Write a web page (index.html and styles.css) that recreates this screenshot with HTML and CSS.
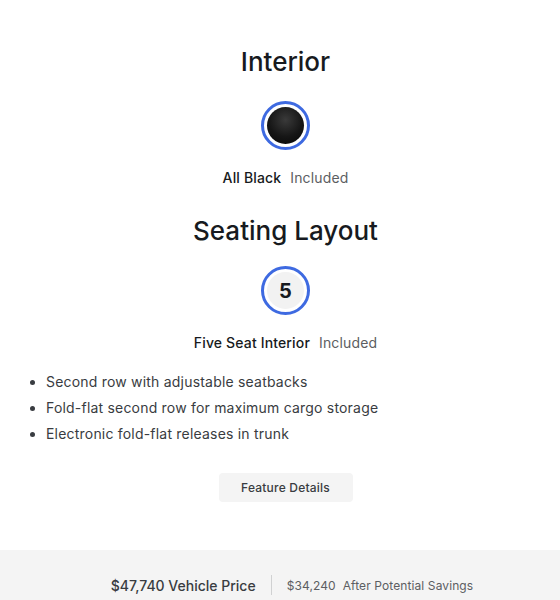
FILE: index.html
```html
<!DOCTYPE html>
<html lang="en">
<head>
<meta charset="utf-8">
<title>Interior</title>
<link rel="stylesheet" href="styles.css">
</head>
<body>
<main class="config">
  <section class="group">
    <h2 class="group-title">Interior</h2>
    <div class="swatch swatch-selected">
      <span class="swatch-black"></span>
    </div>
    <p class="option"><span class="option-name">All Black</span><span class="option-price">Included</span></p>
  </section>
  <section class="group group-seating">
    <h2 class="group-title">Seating Layout</h2>
    <div class="swatch swatch-selected">
      <span class="swatch-num">5</span>
    </div>
    <p class="option"><span class="option-name">Five Seat Interior</span><span class="option-price">Included</span></p>
    <ul class="features">
      <li>Second row with adjustable seatbacks</li>
      <li>Fold-flat second row for maximum cargo storage</li>
      <li>Electronic fold-flat releases in trunk</li>
    </ul>
    <button class="btn-details" type="button">Feature Details</button>
  </section>
</main>
<footer class="price-bar">
  <span class="price-main">$47,740 Vehicle Price</span>
  <span class="price-divider"></span>
  <span class="price-savings">$34,240&nbsp; After Potential Savings</span>
</footer>
</body>
</html>
```
FILE: styles.css
```css
* { box-sizing: border-box; }
html, body { margin: 0; padding: 0; background: #fff; }
body {
  font-family: Inter, "Liberation Sans", sans-serif;
  color: #171a20;
  width: 560px;
  height: 600px;
  overflow: hidden;
}
.config {
  padding: 46px 0 0 11px;
  height: 550px;
}
.group {
  display: flex;
  flex-direction: column;
  align-items: center;
}
.group-title {
  margin: 0;
  font-size: 26px;
  line-height: 32px;
  font-weight: 500;
  color: #171a20;
}
.swatch {
  width: 49px;
  height: 49px;
  border-radius: 50%;
  border: 3px solid #3e6ae1;
  padding: 3px;
  margin-top: 23px;
  display: flex;
  align-items: center;
  justify-content: center;
}
.swatch-black {
  width: 37px;
  height: 37px;
  border-radius: 50%;
  background: radial-gradient(circle at 50% 35%, #3a3a3a 0%, #161616 55%, #050505 100%);
  display: block;
}
.swatch-num {
  width: 37px;
  height: 37px;
  border-radius: 50%;
  background: #f2f2f2;
  display: flex;
  align-items: center;
  justify-content: center;
  font-size: 20px;
  font-weight: 700;
  color: #171a20;
}
.group-seating { margin-top: 27px; }
.group-seating .swatch { margin-top: 19px; }
.option {
  margin: 18px 0 0;
  font-size: 14px;
  line-height: 20px;
  letter-spacing: 0.15px;
}
.option-name { font-weight: 500; color: #171a20; }
.option-price { margin-left: 9px; color: #5c5e62; }
.features {
  align-self: stretch;
  margin: 16px 0 0 -11px;
  padding: 0 0 0 46px;
  font-size: 14px;
  line-height: 26px;
  letter-spacing: 0.2px;
  color: #393c41;
}
.btn-details {
  margin-top: 26px;
  width: 134px;
  height: 29px;
  border: 0;
  border-radius: 4px;
  background: #f4f4f4;
  font-family: inherit;
  font-size: 12px;
  font-weight: 500;
  letter-spacing: 0.2px;
  color: #393c41;
  cursor: pointer;
}
.price-bar {
  height: 50px;
  background: #f4f4f4;
  display: flex;
  align-items: center;
  justify-content: center;
  padding: 20px 0 0 24px;
  gap: 15px;
  color: #393c41;
}
.price-main { font-size: 14px; font-weight: 500; }
.price-divider { width: 1px; height: 20px; background: #d0d1d2; }
.price-savings { font-size: 12px; color: #5c5e62; letter-spacing: 0.1px; }
```
